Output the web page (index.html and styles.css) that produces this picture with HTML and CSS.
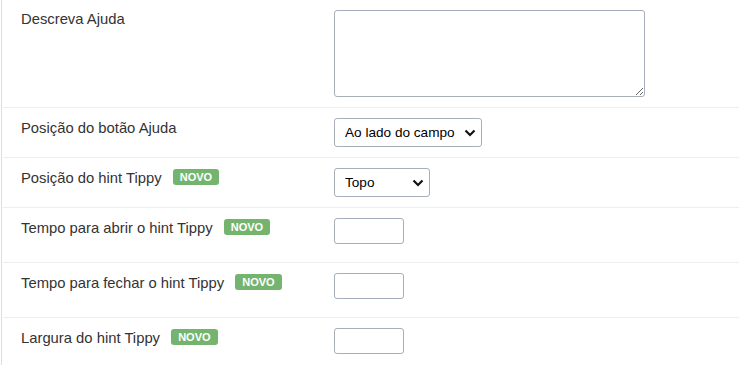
FILE: index.html
```html
<!DOCTYPE html>
<html lang="pt-BR">
<head>
  <meta charset="UTF-8">
  <title>Configurações de Ajuda</title>
  <link rel="stylesheet" href="styles.css">
</head>
<body>

<div class="form-panel">

  <!-- Descreva Ajuda -->
  <div class="row row-first">
    <label class="lbl">Descreva Ajuda</label>
    <div class="ctrl"><textarea class="txt"></textarea></div>
  </div>

  <div class="row">
    <label class="lbl">Posição do botão Ajuda</label>
    <div class="ctrl">
      <div class="sel-wrap">
        <select class="sel sel-wide">
          <option>Ao lado do campo</option>
        </select>
        <svg class="chev" width="12" height="8" viewBox="0 0 12 8"><path d="M1.5 1.5 L6 6 L10.5 1.5" fill="none" stroke="#111" stroke-width="2.2"/></svg>
      </div>
    </div>
  </div>

  <div class="row">
    <label class="lbl">Posição do hint Tippy <span class="badge">NOVO</span></label>
    <div class="ctrl">
      <div class="sel-wrap">
        <select class="sel sel-small">
          <option>Topo</option>
        </select>
        <svg class="chev" width="12" height="8" viewBox="0 0 12 8"><path d="M1.5 1.5 L6 6 L10.5 1.5" fill="none" stroke="#111" stroke-width="2.2"/></svg>
      </div>
    </div>
  </div>

  <div class="row">
    <label class="lbl">Tempo para abrir o hint Tippy <span class="badge">NOVO</span></label>
    <div class="ctrl"><input type="text" class="inp"></div>
  </div>

  <div class="row">
    <label class="lbl">Tempo para fechar o hint Tippy <span class="badge">NOVO</span></label>
    <div class="ctrl"><input type="text" class="inp"></div>
  </div>

  <div class="row last">
    <label class="lbl">Largura do hint Tippy <span class="badge">NOVO</span></label>
    <div class="ctrl"><input type="text" class="inp"></div>
  </div>

</div>

</body>
</html>
```

FILE: styles.css
```css
body { margin: 0; background: #fff; font-family: Arial, "Liberation Sans", sans-serif; font-size: 14.8px; color: #333; }

.form-panel { margin-left: 1px; border-left: 1px solid #d9dde4; min-height: 365px; }

.row { display: grid; grid-template-columns: 331px 1fr; padding: 10px 0; border-bottom: 1px solid #eceef1; margin-left: 1px; }
.row.last { border-bottom: none; }

.lbl { display: block; padding-left: 18px; line-height: 18px; padding-top: 1px; }
.row-first .lbl { padding-top: 0; }

.ctrl { display: flex; align-items: flex-start; }

.txt { width: 311px; height: 87px; box-sizing: border-box; border: 1px solid #a6aeb9; border-radius: 3px; margin: 0; padding: 4px 6px; font-family: inherit; font-size: 14px; }

.sel-wrap { position: relative; display: inline-block; }
.sel { display: block; height: 29px; box-sizing: border-box; border: 1px solid #a6aeb9; border-radius: 3px; background: #fff; color: #000; font-family: Arial, "Liberation Sans", sans-serif; font-size: 13.6px; padding: 0 4px 0 10px; margin: 0; appearance: none; -webkit-appearance: none; }
.sel-wide { width: 148px; }
.sel-small { width: 96px; }
.chev { position: absolute; right: 6px; top: 11px; pointer-events: none; }

.inp { width: 70px; height: 26px; box-sizing: border-box; border: 1px solid #a6aeb9; border-radius: 3px; margin: 0 0 8px 0; padding: 2px 6px; }

.badge { display: inline-block; margin-left: 7px; padding: 0 7px; height: 16px; line-height: 16px; border-radius: 3px; background: #74b46f; color: #fff; font-size: 11px; font-weight: bold; vertical-align: 2px; }
```
